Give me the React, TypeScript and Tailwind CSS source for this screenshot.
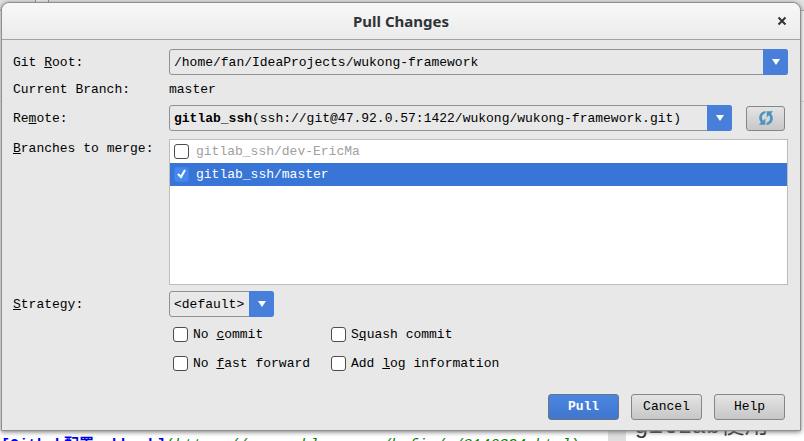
import { useState } from "react";
import type { ReactNode } from "react";

function Arrow() {
  return (
    <span className="pointer-events-none absolute inset-y-0 right-0 flex w-[25px] items-center justify-center rounded-r-[3px] bg-[#487fdb]">
      <svg width="8" height="6" viewBox="0 0 8 6" aria-hidden="true">
        <path d="M0 0h8L4 6z" fill="#fff" />
      </svg>
    </span>
  );
}

const field =
  "h-[26px] w-full appearance-none rounded-[3px] border border-[#919191] bg-[#e8e8e8] pt-[2px] pl-1 pr-7 text-black";

function Option({ children }: { children: ReactNode }) {
  return (
    <label className="flex h-[29px] items-center gap-[5px]">
      <Tick />
      <span className="pt-px">{children}</span>
    </label>
  );
}

function Tick({ initial = false }: { initial?: boolean }) {
  const [on, setOn] = useState(initial);
  return (
    <span className="relative flex size-[15px] shrink-0">
      <input
        type="checkbox"
        checked={on}
        onChange={() => setOn(!on)}
        className="size-[15px] appearance-none rounded-[3px] border border-[#4c4c4c] bg-white checked:border-[#3d83ed] checked:bg-[#4689ee]"
      />
      {on && (
        <svg className="pointer-events-none absolute inset-0" width="15" height="15" viewBox="0 0 15 15" aria-hidden="true">
          <path d="M4 7l3 3 4-7" fill="none" stroke="#fff" strokeWidth="2" />
        </svg>
      )}
    </span>
  );
}

/* Editor window that the dialog floats over */
function Backdrop() {
  return (
    <div className="absolute inset-0 flex flex-col overflow-hidden bg-white">
      <div className="h-[11px] shrink-0 border-b border-[#aaa] bg-[#e2e2e2]">
        <div className="ml-[35px] h-[3px] w-[14px] border border-t-0 border-[#8c8c8c] bg-[#ececec]" />
      </div>
      <div className="h-[91px] shrink-0 border-b border-[#ddd]" />
      <div className="relative flex-1">
        <div className="absolute right-0 bottom-0 left-0 flex h-7">
          <div className="w-[608px] shrink-0 overflow-hidden pt-6 pl-px text-[15px] leading-[18px] whitespace-nowrap">
            <b className="text-[#0000e6]">[Github配置webhook]</b>
            <span className="text-[#008000]">
              (<i>https://www.cnblogs.com/hafiz/p/8146394.html</i>)
            </span>
          </div>
          <div className="w-[18px] shrink-0 bg-[#dedede]" />
          <div className="flex-1 overflow-hidden pl-2 text-2xl leading-7 whitespace-nowrap text-[#333]">gitLab使用</div>
        </div>
      </div>
    </div>
  );
}

const button =
  "h-[26px] w-[71px] rounded-[3px] border border-[#868686] bg-linear-to-b from-[#e4e4e4] to-[#c7c7c7]";

export default function App() {
  return (
    <div className="relative flex min-h-screen flex-col overflow-hidden pt-[2px] pr-[3px] pl-px font-['Liberation_Mono','Noto_Sans_CJK_SC',monospace] text-[13px] leading-4 text-black">
      <Backdrop />
      <main className="relative rounded-t-lg border border-[#8f8f8f] bg-[#e8e8e8] shadow-[0_1px_5px_#777]">
        <header className="flex h-[37px] items-center rounded-t-lg border-b border-[#a3a3a3] bg-linear-to-b from-[#f8f8f8] to-[#ebebeb] pr-[10px] pl-[26px] font-['Noto_Sans',sans-serif] text-[#2e3436]">
          <h1 className="flex-1 text-center text-[15px] font-bold">Pull Changes</h1>
          <button aria-label="Close" className="flex size-4 items-center justify-center">
            <svg width="10" height="10" viewBox="0 0 10 10" aria-hidden="true">
              <path d="M1.5 1.5l7 7M8.5 1.5l-7 7" stroke="#2e3436" strokeWidth="2" />
            </svg>
          </button>
        </header>
        <div className="grid grid-cols-[156px_1fr] pt-[9px] pr-3 pl-[11px]">
          <label htmlFor="root" className="pt-[6px]">Git <u>R</u>oot:</label>
          <div className="relative h-[26px]">
            <select id="root" className={field}>
              <option>/home/fan/IdeaProjects/wukong-framework</option>
            </select>
            <Arrow />
          </div>
          <span className="pt-[7px]">Current Branch:</span>
          <span className="h-[30px] pt-[7px]">master</span>
          <label htmlFor="remote" className="pt-[6px]">Re<u>m</u>ote:</label>
          <div className="flex items-center gap-[14px] pr-[3px]">
            <div className="relative h-[26px] min-w-0 flex-1">
              <button id="remote" aria-haspopup="listbox" className={`${field} overflow-hidden text-left whitespace-nowrap`}>
                <b>gitlab_ssh</b>(ssh://git@47.92.0.57:1422/wukong/wukong-framework.git)
              </button>
              <Arrow />
            </div>
            <button aria-label="Refresh remotes" className="flex h-[25px] w-[39px] items-center justify-center rounded-[3px] border border-[#868686] bg-linear-to-b from-[#e4e4e4] to-[#c7c7c7]">
              <svg width="16" height="16" viewBox="0 0 16 16" fill="#4a94bf" aria-hidden="true">
                <path d="M7.5 1C3.5 1.300 1 4.500 1.200 8c.1 1.800.8 3.200 1.800 4.400L.8 14.700H7.300V8.500L5 10.700C3.200 8.500 3.500 4.500 7.500 3z" />
                <path d="M8.500 15c4-.3 6.500-3.500 6.300-7-.1-1.800-.8-3.200-1.800-4.400l2.200-2.300H8.700v6.200L11 5.300c1.800 2.200 1.500 6.200-2.500 7.700z" />
              </svg>
            </button>
          </div>
          <span id="branches" className="pt-[10px]"><u>B</u>ranches to merge:</span>
          <div role="group" aria-labelledby="branches" className="mt-2 h-[146px] border border-[#bdbdbd] bg-white">
            <label className="flex h-[23px] items-center gap-[7px] pl-1 text-[#a0a0a0]">
              <Tick /><span className="pt-px">gitlab_ssh/dev-EricMa</span>
            </label>
            <label className="flex h-[23px] items-center gap-[7px] bg-[#3875d7] pl-1 text-white">
              <Tick initial /><span className="pt-px">gitlab_ssh/master</span>
            </label>
          </div>
          <label htmlFor="strategy" className="pt-[12px]"><u>S</u>trategy:</label>
          <div className="relative mt-[6px] h-[26px] w-[105px]">
            <select id="strategy" className={field}>
              <option>&lt;default&gt;</option>
            </select>
            <Arrow />
          </div>
          <div className="col-start-2 grid grid-cols-[158px_1fr] pt-[3px] pl-1">
            <Option>No <u>c</u>ommit</Option>
            <Option>S<u>q</u>uash commit</Option>
            <Option>No <u>f</u>ast forward</Option>
            <Option>Add <u>l</u>og information</Option>
          </div>
        </div>
        <footer className="flex justify-end gap-3 pt-4 pr-[15px] pb-[10px]">
          <button className="h-[26px] w-[71px] rounded-[3px] border border-[#6d7484] bg-linear-to-b from-[#4a86e2] to-[#4176cc] font-bold text-white">Pull</button>
          <button className={button}>Cancel</button>
          <button className={button}>Help</button>
        </footer>
      </main>
    </div>
  );
}
